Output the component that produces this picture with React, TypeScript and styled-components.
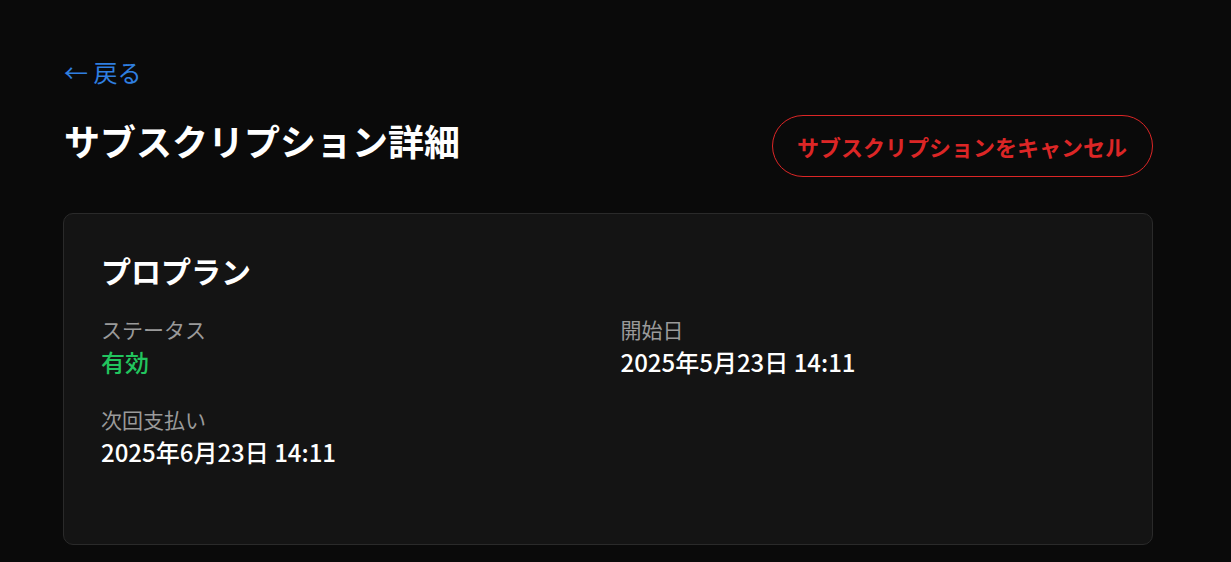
import React from 'react';
import styled, { createGlobalStyle } from 'styled-components';

const GlobalStyle = createGlobalStyle`
  body {
    margin: 0;
    background-color: #0a0a0a;
    font-family: "Noto Sans CJK JP", "Noto Sans", sans-serif;
    color: #ffffff;
  }
`;

const Page = styled.div`
  width: 1090px;
  padding: 54px 0 0 63px;
`;

const BackLink = styled.a`
  display: inline-block;
  padding-left: 1px;
  color: #2f7fe0;
  font-size: 24px;
  line-height: 36px;
  text-decoration: none;
  cursor: pointer;
`;

const Header = styled.div`
  display: flex;
  justify-content: space-between;
  align-items: flex-start;
  margin-top: 25px;
`;

const Title = styled.h1`
  margin: 0;
  padding-left: 1px;
  font-size: 36px;
  line-height: 50px;
  font-weight: 700;
`;

const CancelButton = styled.button`
  height: 62px;
  padding: 0 25px 0 24px;
  border: 1px solid #dc2626;
  border-radius: 999px;
  background: transparent;
  color: #dc2626;
  font-family: inherit;
  font-size: 22px;
  font-weight: 700;
  cursor: pointer;
`;

const Card = styled.section`
  margin-top: 36px;
  padding: 36px 36px 76px 37px;
  background-color: #141414;
  border: 1px solid #2a2a2a;
  border-radius: 10px;
`;

const PlanName = styled.h2`
  margin: 0;
  font-size: 30px;
  line-height: 40px;
  font-weight: 700;
`;

const InfoGrid = styled.div`
  display: grid;
  grid-template-columns: 1fr 1fr;
  column-gap: 24px;
  row-gap: 26px;
  margin-top: 24px;
`;

const Label = styled.div`
  color: #9a9a9a;
  font-size: 21px;
  line-height: 30px;
`;

const Value = styled.div<{ $accent?: boolean }>`
  margin-top: 2px;
  color: ${(p) => (p.$accent ? '#22c55e' : '#ffffff')};
  font-size: 24px;
  line-height: 32px;
  font-weight: 500;
`;

const items = [
  { label: 'ステータス', value: '有効', accent: true },
  { label: '開始日', value: '2025年5月23日 14:11' },
  { label: '次回支払い', value: '2025年6月23日 14:11' },
];

const App: React.FunctionComponent = () => (
  <>
    <GlobalStyle />
    <Page>
      <BackLink>← 戻る</BackLink>
      <Header>
        <Title>サブスクリプション詳細</Title>
        <CancelButton>サブスクリプションをキャンセル</CancelButton>
      </Header>
      <Card>
        <PlanName>プロプラン</PlanName>
        <InfoGrid>
          {items.map((item) => (
            <div key={item.label}>
              <Label>{item.label}</Label>
              <Value $accent={item.accent}>{item.value}</Value>
            </div>
          ))}
        </InfoGrid>
      </Card>
    </Page>
  </>
);

export default App;
